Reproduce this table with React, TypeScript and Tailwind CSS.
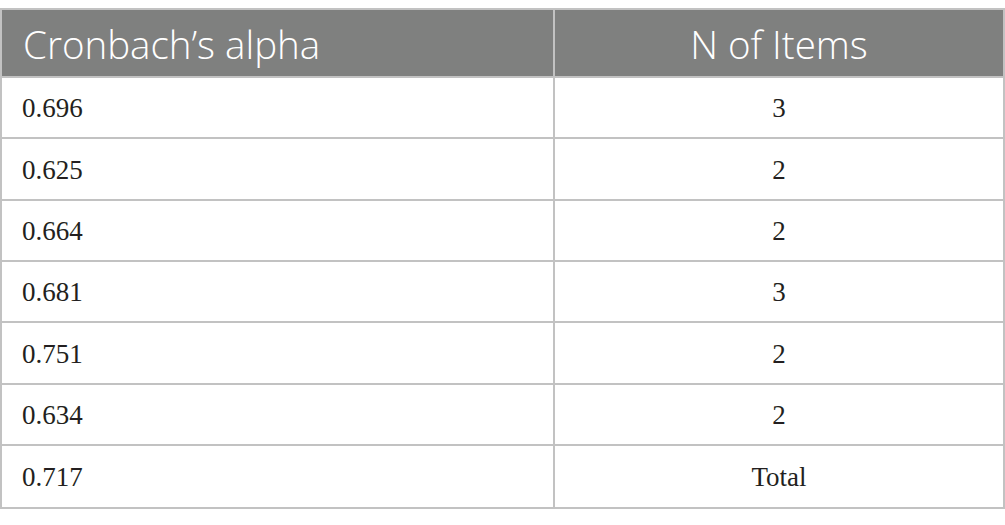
import React from "react";

const rows: [string, string, string][] = [
  ["0.696", "3", "h-[61px]"],
  ["0.625", "2", "h-[62px]"],
  ["0.664", "2", "h-[61px]"],
  ["0.681", "3", "h-[61px]"],
  ["0.751", "2", "h-[62px]"],
  ["0.634", "2", "h-[61px]"],
  ["0.717", "Total", "h-[61px]"],
];

export default function App() {
  return (
    <div className="w-[1005px] h-[525px] bg-white pt-[8px]">
      <div className="w-[1005px] border-2 border-[#c2c2c2]">
        <div className="grid grid-cols-[553px_1fr] h-[68px] bg-[#7f807f] border-b-2 border-[#c2c2c2] text-white text-[38.5px] leading-none font-light font-['Open_Sans',sans-serif]">
          <div className="flex items-center pl-[21px] pt-[2px] border-r-2 border-[#c2c2c2]">Cronbach’s alpha</div>
          <div className="flex items-center justify-center pt-[2px]">N of Items</div>
        </div>
        {rows.map(([a, b, h], i) => (
          <div
            key={i}
            className={`grid grid-cols-[553px_1fr] ${h} ${i < rows.length - 1 ? "border-b-2 border-[#c2c2c2]" : ""} text-[27px] text-[#231f20] font-['Liberation_Serif',serif]`}
          >
            <div className="flex items-center pl-[20px] pt-[2px] border-r-2 border-[#c2c2c2]">{a}</div>
            <div className="flex items-center justify-center pt-[2px]">{b}</div>
          </div>
        ))}
      </div>
    </div>
  );
}
